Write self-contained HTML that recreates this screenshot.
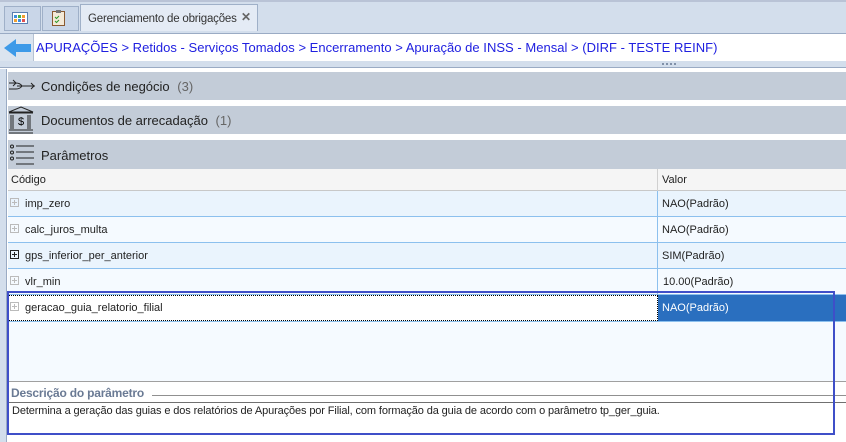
<!DOCTYPE html><html><head><style>
*{margin:0;padding:0;box-sizing:border-box}
body{width:846px;height:442px;overflow:hidden;background:#fff;font-family:"Liberation Sans",sans-serif;font-size:11px;position:relative}
.a{position:absolute;white-space:nowrap}
</style></head><body>
<div class="a" style="left:0;top:0;width:846px;height:32px;background:#d3deec;border-top:2px solid #b9c3d6"></div>
<div class="a" style="left:4px;top:6px;width:37px;height:25px;background:#c9d6e8;border:1px solid #9fb0c8"></div>
<svg class="a" style="left:12px;top:12px" width="16" height="12"><rect x=".5" y=".5" width="15" height="11" fill="#fff" stroke="#5a7fb0"/><rect x="2" y="3" width="3" height="3" fill="#3d8fe0"/><rect x="6" y="3" width="3" height="3" fill="#48b048"/><rect x="10" y="3" width="3" height="3" fill="#f0a030"/><rect x="2" y="7" width="3" height="3" fill="#f0a030"/><rect x="6" y="7" width="3" height="3" fill="#3d8fe0"/><rect x="10" y="7" width="3" height="3" fill="#e05050"/></svg>
<div class="a" style="left:42px;top:6px;width:37px;height:25px;background:#c9d6e8;border:1px solid #9fb0c8"></div>
<svg class="a" style="left:52px;top:10px" width="13" height="16"><rect x=".5" y="1.5" width="12" height="14" fill="#f4ead8" stroke="#8a5a30"/><rect x="4" y="0" width="5" height="3" fill="#777"/><path d="M3 7l1.5 1.5L7 6M3 11l1.5 1.5L7 10" stroke="#2a9a2a" fill="none"/></svg>
<div class="a" style="left:80px;top:4px;width:178px;height:28px;background:#e4ebf5;border:1px solid #9fb0c8;border-bottom:none;padding:8px 7px;color:#333;font-size:11.5px;letter-spacing:-0.2px">Gerenciamento de obrigações</div>
<div class="a" style="left:241px;top:10px;font-weight:bold;color:#666;font-size:12px">✕</div>
<div class="a" style="left:0;top:31px;width:846px;height:3px;background:#d3deec;border-bottom:1px solid #9aabc4"></div>
<div class="a" style="left:0;top:34px;width:34px;height:27px;background:#dbe4ef;border-right:1px solid #b5c1d2"></div>
<svg class="a" style="left:4px;top:38px" width="27" height="20"><path d="M0 10L12 1v5h15v8H12v5z" fill="#3d9ae8"/></svg>
<div class="a" style="left:36px;top:40px;font-size:13px;letter-spacing:0.02px;color:#2020e0">APURAÇÕES &gt; Retidos - Serviços Tomados &gt; Encerramento &gt; Apuração de INSS - Mensal &gt; (DIRF - TESTE REINF)</div>
<div class="a" style="left:0;top:61px;width:846px;height:7px;background:#d3deec;border-bottom:1px solid #9aabc4"></div>
<div class="a" style="left:662px;top:63px;width:14px;height:2px;border-top:2px dotted #8090a8"></div>
<div class="a" style="left:0;top:69px;width:7px;height:373px;background:#d3deec;border-right:1px solid #9aabc4"></div>
<div class="a" style="left:8px;top:72px;width:838px;height:28px;background:#c3ccd8"></div>
<div class="a" style="left:8px;top:106px;width:838px;height:28px;background:#c3ccd8"></div>
<div class="a" style="left:8px;top:140px;width:838px;height:29px;background:#c3ccd8"></div>
<svg class="a" style="left:8px;top:77px" width="30" height="18"><path d="M1 6h7q4 0 6 3q-2 3-6 3H1M9 9h18M23 6l3 3-3 3M5 3l3 3-3 3" stroke="#222" fill="none"/></svg>
<div class="a" style="left:41px;top:79px;font-size:13px;color:#222">Condições de negócio <span style="color:#666;margin-left:4px">(3)</span></div>
<svg class="a" style="left:8px;top:106px" width="28" height="28"><path d="M1 6L13 1l12 5zM1 7h24M3 9v14M5 9v14M22 9v14M20 9v14M1 24h24M1 27h24" stroke="#222" fill="none"/><text x="10" y="19" font-size="11" font-family="Liberation Sans">$</text></svg>
<div class="a" style="left:41px;top:113px;font-size:13px;color:#222">Documentos de arrecadação <span style="color:#666;margin-left:4px">(1)</span></div>
<svg class="a" style="left:9px;top:144px" width="28" height="24"><g stroke="#222" fill="none"><circle cx="3" cy="2.5" r="1.5"/><circle cx="3" cy="8.5" r="1.5"/><circle cx="3" cy="14.5" r="1.5"/><path d="M7 2h18M7 8h18M7 14h18M7 20h18"/></g></svg>
<div class="a" style="left:41px;top:148px;font-size:13px;color:#222">Parâmetros</div>
<div class="a" style="left:8px;top:169px;width:838px;height:22px;background:#f5f5f5;border-bottom:1px solid #c8c8c8"></div>
<div class="a" style="left:11px;top:174px;color:#222">Código</div>
<div class="a" style="left:657px;top:169px;width:1px;height:22px;background:#d0d0d0"></div>
<div class="a" style="left:662px;top:174px;color:#222">Valor</div>
<div class="a" style="left:8px;top:191px;width:838px;height:190px;background:#f5faff"></div>
<div class="a" style="left:8px;top:191px;width:838px;height:26px;background:#eaf4fd;border-bottom:1px solid #8cc0ee"></div>
<div class="a" style="left:8px;top:217px;width:838px;height:26px;background:#f5faff;border-bottom:1px solid #8cc0ee"></div>
<div class="a" style="left:8px;top:243px;width:838px;height:26px;background:#eaf4fd;border-bottom:1px solid #8cc0ee"></div>
<div class="a" style="left:8px;top:269px;width:838px;height:26px;background:#f5faff;border-bottom:1px solid #8cc0ee"></div>
<div class="a" style="left:8px;top:295px;width:650px;height:26px;background:#fff;border:1px dotted #000"></div>
<div class="a" style="left:658px;top:295px;width:188px;height:26px;background:#2a6fbf"></div>
<div class="a" style="left:657px;top:191px;width:1px;height:104px;background:#8cc0ee"></div>
<div class="a" style="left:8px;top:321px;width:838px;height:1px;background:#8cc0ee"></div>
<svg class="a" style="left:10px;top:198px" width="12" height="120"><g fill="none" stroke="#bbb"><rect x=".5" y=".5" width="8" height="8"/><path d="M2 4.5h5M4.5 2v5"/><rect x=".5" y="26.5" width="8" height="8"/><path d="M2 30.5h5M4.5 28v5"/><rect x=".5" y="78.5" width="8" height="8"/><path d="M2 82.5h5M4.5 80v5"/><rect x=".5" y="104.5" width="8" height="8"/><path d="M2 108.5h5M4.5 106v5"/></g><g fill="none" stroke="#222"><rect x=".5" y="52.5" width="8" height="8"/><path d="M2 56.5h5M4.5 54v5"/></g></svg>
<div class="a" style="left:25px;top:198px;color:#222">imp_zero</div>
<div class="a" style="left:25px;top:224px;color:#222">calc_juros_multa</div>
<div class="a" style="left:25px;top:250px;color:#222">gps_inferior_per_anterior</div>
<div class="a" style="left:25px;top:276px;color:#222">vlr_min</div>
<div class="a" style="left:25px;top:302px;color:#222">geracao_guia_relatorio_filial</div>
<div class="a" style="left:662px;top:198px;color:#222">NAO(Padrão)</div>
<div class="a" style="left:662px;top:224px;color:#222">NAO(Padrão)</div>
<div class="a" style="left:662px;top:250px;color:#222">SIM(Padrão)</div>
<div class="a" style="left:663px;top:276px;color:#222">10.00(Padrão)</div>
<div class="a" style="left:662px;top:302px;color:#fff">NAO(Padrão)</div>
<div class="a" style="left:8px;top:381px;width:838px;height:1px;background:#a0a0a0"></div>
<div class="a" style="left:11px;top:386px;color:#6a7a94;font-weight:bold;font-size:12px;letter-spacing:-0.2px;background:#fff;padding-right:4px">Descrição do parâmetro</div>
<div class="a" style="left:152px;top:395px;width:694px;height:1px;background:#909090"></div>
<div class="a" style="left:8px;top:402px;width:838px;height:1px;background:#707070"></div>
<div class="a" style="left:12px;top:405px;color:#222;letter-spacing:-0.12px">Determina a geração das guias e dos relatórios de Apurações por Filial, com formação da guia de acordo com o parâmetro tp_ger_guia.</div>
<div class="a" style="left:7px;top:291px;width:828px;height:144px;border:2px solid #3f4fc8"></div>
</body></html>
